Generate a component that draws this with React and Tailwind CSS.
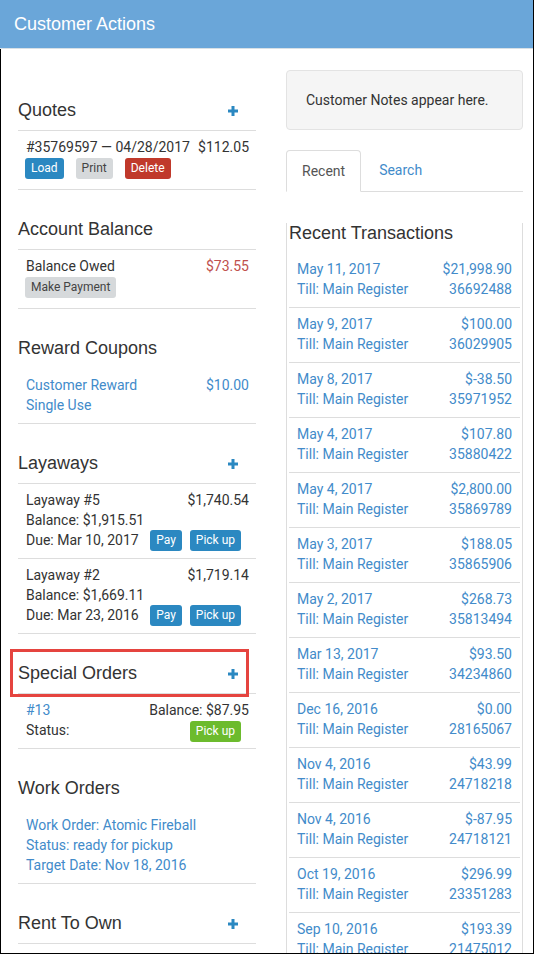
import React from "react";

const LINK = "text-[#428bca]";

function Plus() {
  return (
    <svg width="10" height="10" viewBox="0 0 10 10" className="mr-[18px] mt-[6px] shrink-0">
      <rect x="3.5" y="0" width="3" height="10" fill="#2b88c1" />
      <rect x="0" y="3.5" width="10" height="3" fill="#2b88c1" />
    </svg>
  );
}

function Heading({ title, plus, line = true, annotate, first }) {
  return (
    <div
      className={`relative flex items-start justify-between border-b pb-[10px] ${
        first ? "mt-[31px]" : "mt-[29px]"
      } ${line ? "border-[#ddd]" : "border-transparent"}`}
    >
      <span className="font-['Liberation_Sans',Arial,sans-serif] text-[18px] leading-[20px] text-[#333]">
        {title}
      </span>
      {plus && <Plus />}
      {annotate && (
        <div className="pointer-events-none absolute left-[-8px] top-[-14px] h-[48px] w-[239px] border-[3px] border-[#e5443f]" />
      )}
    </div>
  );
}

function Item({ children }) {
  return (
    <div className="border-b border-[#ddd] pb-[8px] pl-[8px] pr-[7px] pt-[6px] text-[14px] leading-[20px] text-[#333]">
      {children}
    </div>
  );
}

function Btn({ children, kind = "blue", className = "" }) {
  const styles = {
    blue: "bg-[#2b88c1] text-white",
    gray: "bg-[#d6d9db] text-[#444]",
    red: "bg-[#c0392b] text-white",
    green: "bg-[#6cbb2d] text-white",
  };
  return (
    <span
      className={`inline-flex h-[21px] items-center rounded-[3px] px-[6px] text-[12px] leading-[21px] ${styles[kind]} ${className}`}
    >
      {children}
    </span>
  );
}

function Row({ left, right, className = "" }) {
  return (
    <div className={`flex justify-between ${className}`}>
      <span>{left}</span>
      <span>{right}</span>
    </div>
  );
}

const transactions = [
  ["May 11, 2017", "$21,998.90", "36692488"],
  ["May 9, 2017", "$100.00", "36029905"],
  ["May 8, 2017", "$-38.50", "35971952"],
  ["May 4, 2017", "$107.80", "35880422"],
  ["May 4, 2017", "$2,800.00", "35869789"],
  ["May 3, 2017", "$188.05", "35865906"],
  ["May 2, 2017", "$268.73", "35813494"],
  ["Mar 13, 2017", "$93.50", "34234860"],
  ["Dec 16, 2016", "$0.00", "28165067"],
  ["Nov 4, 2016", "$43.99", "24718218"],
  ["Nov 4, 2016", "$-87.95", "24718121"],
  ["Oct 19, 2016", "$296.99", "23351283"],
  ["Sep 10, 2016", "$193.39", "21475012"],
];

function Layaway({ name, amount, balance, due }) {
  return (
    <Item>
      <Row left={name} right={amount} />
      <div>{balance}</div>
      <div className="flex h-[20px] items-start justify-between">
        <span>{due}</span>
        <div className="mr-[8px] flex gap-[8px]">
          <Btn>Pay</Btn>
          <Btn>Pick up</Btn>
        </div>
      </div>
    </Item>
  );
}

export default function App() {
  return (
    <div className="h-[954px] w-[534px] overflow-hidden border-b border-r border-black bg-white font-['Roboto',sans-serif]">
      <div className="flex h-[49px] items-center border-b border-[#d8e0e6] bg-[#6aa6d9] pl-[14px] pt-[1px]">
        <span className="font-['Liberation_Sans',Arial,sans-serif] text-[18px] text-white">
          Customer Actions
        </span>
      </div>
      <div className="grid h-full grid-cols-[238px_237px] gap-x-[30px] border-l border-black pl-[17px] pt-[20px]">
        {/* Left column */}
        <div>
          <Heading title="Quotes" plus first />
          <Item>
            <Row left="#35769597 — 04/28/2017" right="$112.05" />
            <div className="mb-[2px] ml-[-1px] mt-[1px] flex gap-[12px]">
              <Btn>Load</Btn>
              <Btn kind="gray">Print</Btn>
              <Btn kind="red">Delete</Btn>
            </div>
          </Item>

          <Heading title="Account Balance" />
          <Item>
            <Row left="Balance Owed" right={<span className="text-[#c0504d]">$73.55</span>} />
            <div className="mb-[2px] ml-[-1px] mt-[1px] flex">
              <Btn kind="gray">Make Payment</Btn>
            </div>
          </Item>

          <Heading title="Reward Coupons" line={false} />
          <Item>
            <div className={LINK}>
              <Row left="Customer Reward" right="$10.00" />
              <div>Single Use</div>
            </div>
          </Item>

          <Heading title="Layaways" plus />
          <Layaway name="Layaway #5" amount="$1,740.54" balance="Balance: $1,915.51" due="Due: Mar 10, 2017" />
          <Layaway name="Layaway #2" amount="$1,719.14" balance="Balance: $1,669.11" due="Due: Mar 23, 2016" />

          <Heading title="Special Orders" plus annotate />
          <Item>
            <Row left={<span className={LINK}>#13</span>} right="Balance: $87.95" />
            <div className="flex h-[20px] items-start justify-between">
              <span>Status:</span>
              <Btn kind="green" className="mr-[8px] mt-[1px]">
                Pick up
              </Btn>
            </div>
          </Item>

          <Heading title="Work Orders" line={false} />
          <Item>
            <div className={LINK}>
              <div>Work Order: Atomic Fireball</div>
              <div>Status: ready for pickup</div>
              <div>Target Date: Nov 18, 2016</div>
            </div>
          </Item>

          <Heading title="Rent To Own" plus />
          <Item>
            <div className="h-[40px]" />
          </Item>
        </div>

        {/* Right column */}
        <div className="pt-[1px]">
          <div className="rounded-[4px] border border-[#e3e3e3] bg-[#f5f5f5] p-[19px] text-[14px] leading-[20px] text-[#333]">
            Customer Notes appear here.
          </div>
          <div className="mt-[20px] flex border-b border-[#ddd] text-[14px] leading-[20px]">
            <div className="-mb-px rounded-t-[4px] border border-[#ddd] border-b-transparent bg-white px-[15px] py-[10px] text-[#555]">
              Recent
            </div>
            <div className={`ml-[2px] px-[16px] py-[10px] ${LINK}`}>Search</div>
          </div>
          <div className="h-full border-l border-r border-[#ddd] px-[2px]">
            <div className="mt-[31px] font-['Liberation_Sans',Arial,sans-serif] text-[18px] leading-[20px] text-[#333]">
              Recent Transactions
            </div>
            <div className="mt-[10px]">
              {transactions.map(([d, amt, id], i) => (
                <div
                  key={i}
                  className={`border-b border-[#ddd] pb-[8px] pl-[8px] pr-[8px] pt-[6px] text-[14px] leading-[20px] ${LINK}`}
                >
                  <Row left={d} right={amt} />
                  <Row left="Till: Main Register" right={id} />
                </div>
              ))}
            </div>
          </div>
        </div>
      </div>
    </div>
  );
}
